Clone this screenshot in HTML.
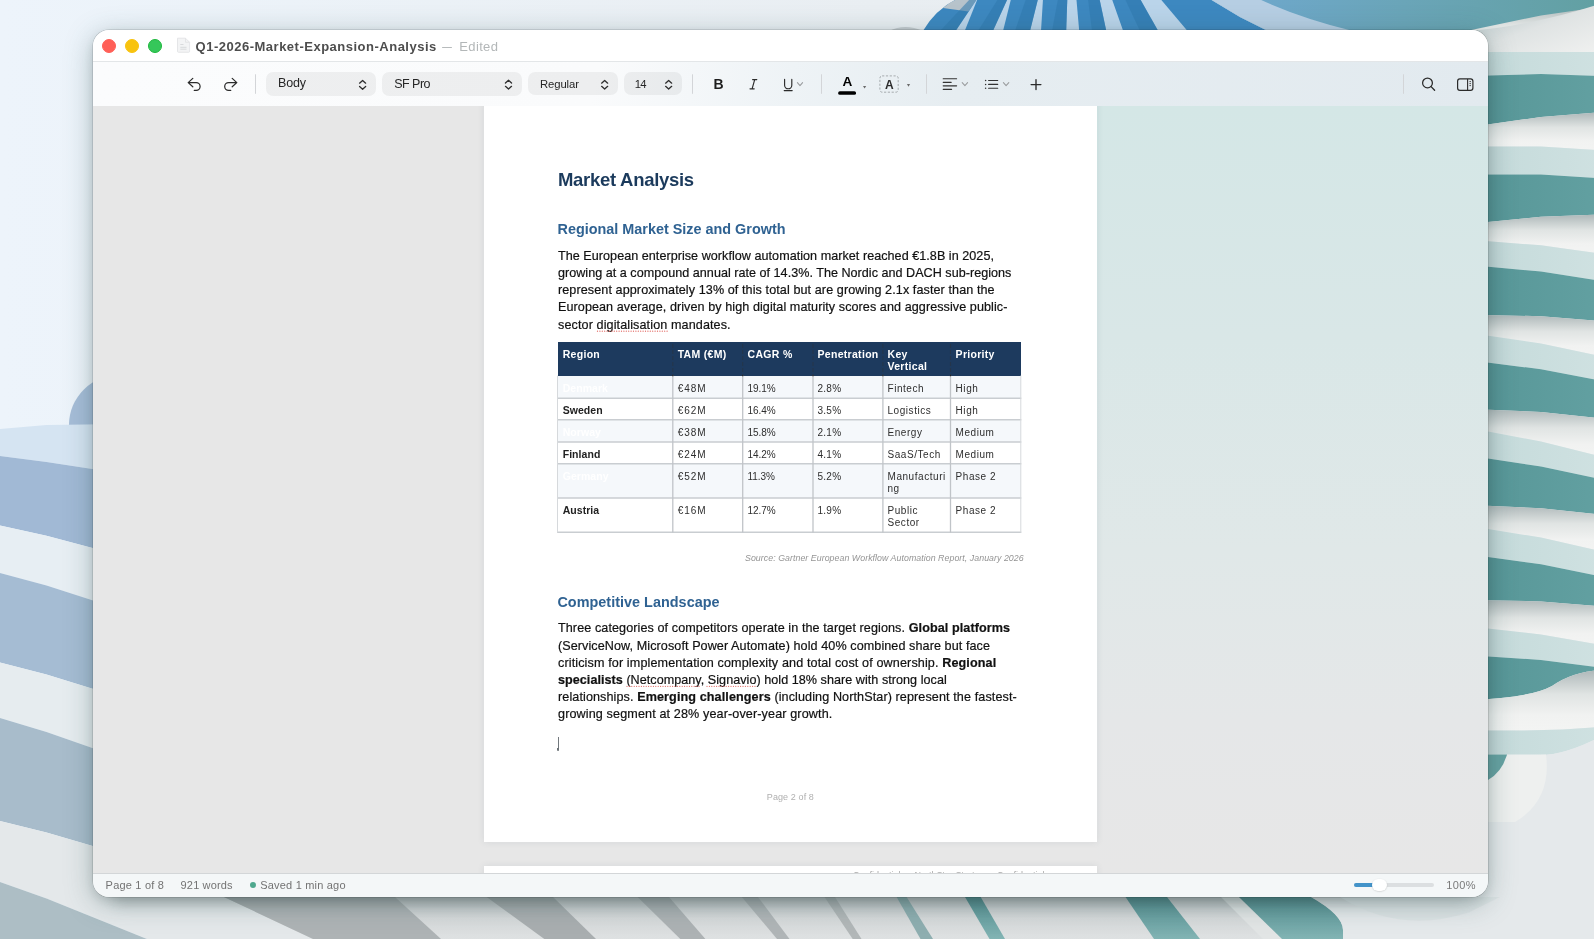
<!DOCTYPE html>
<html><head><meta charset="utf-8">
<style>
*{margin:0;padding:0;box-sizing:border-box}
html,body{width:1594px;height:939px;overflow:hidden}
body{position:relative;font-family:"Liberation Sans", sans-serif;background:#eaf1f8}
.t{position:absolute;white-space:pre;line-height:1}
.r{position:absolute}
svg{position:absolute;overflow:visible}
</style></head><body><div id="root" style="position:absolute;left:0;top:0;width:1594px;height:939px;will-change:transform">
<svg style="left:0;top:0" width="1594" height="939" viewBox="0 0 1594 939"><defs>
<linearGradient id="gbase" x1="0" y1="0" x2="1" y2="0"><stop offset="0" stop-color="#edf4fb"/><stop offset="0.55" stop-color="#e9eef2"/><stop offset="1" stop-color="#e6eaec"/></linearGradient>
<linearGradient id="gteal" x1="0" y1="0" x2="0" y2="1"><stop offset="0" stop-color="#5a9a9b"/><stop offset="1" stop-color="#4f8e90"/></linearGradient>
<linearGradient id="gwhite" x1="0" y1="0" x2="0" y2="1"><stop offset="0" stop-color="#cfd5d6"/><stop offset="0.45" stop-color="#eef0ef"/><stop offset="1" stop-color="#f2f3f2"/></linearGradient>
<linearGradient id="gtopblue" x1="0" y1="0" x2="1" y2="0"><stop offset="0" stop-color="#6fa8d0"/><stop offset="0.5" stop-color="#6aa5b8"/><stop offset="1" stop-color="#62a0a2"/></linearGradient>
<linearGradient id="tband" x1="0" y1="0" x2="0" y2="1"><stop offset="0" stop-color="#558f91"/><stop offset="1" stop-color="#82b4b4"/></linearGradient>
<linearGradient id="gbot" x1="0" y1="0" x2="0" y2="1"><stop offset="0" stop-color="#c3c7c9"/><stop offset="0.5" stop-color="#d6d9da"/><stop offset="1" stop-color="#dee1e2"/></linearGradient>
</defs><rect width="1594" height="939" fill="url(#gbase)"/><circle cx="119" cy="425" r="50" fill="#a6bdd8"/><path d="M0.0,429.0 L46.5,425.0 L420.0,420.0 L420.0,519.2 L46.5,462.0 L0.0,456.0 Z" fill="#d5e4f2"/><path d="M0.0,456.0 L46.5,462.0 L420.0,519.2 L420.0,635.3 L46.5,535.8 L0.0,525.6 Z" fill="#a1b9d5"/><path d="M0.0,525.6 L46.5,535.8 L420.0,635.3 L420.0,705.7 L46.5,585.6 L0.0,572.9 Z" fill="#e7eef3"/><path d="M0.0,572.9 L46.5,585.6 L420.0,705.7 L420.0,789.8 L46.5,674.5 L0.0,662.4 Z" fill="#a5bcd3"/><path d="M0.0,662.4 L46.5,674.5 L420.0,789.8 L420.0,862.5 L46.5,732.0 L0.0,718.0 Z" fill="#e6ecef"/><path d="M0.0,718.0 L46.5,732.0 L420.0,862.5 L420.0,941.6 L46.5,832.4 L0.0,821.0 Z" fill="#a8bccb"/><path d="M0.0,821.0 L46.5,832.4 L420.0,941.6 L420.0,1049.1 L46.5,898.5 L0.0,882.0 Z" fill="#e4e8ea"/><path d="M0.0,882.0 L46.5,898.5 L420.0,1049.1 L420.0,1140.6 L46.5,980.0 L0.0,960.0 Z" fill="#adbec5"/><path d="M889,31 Q905,23 923,31 Z" fill="#c6ccd0"/><path d="M922.9,31 Q935,10 956.7,-1 L980,-1 L977,12 L955.6,31 Z" fill="#3c87bf"/><path d="M943,8 Q950,2 957,-1 L980,-1 L972,12 Z" fill="#b7c3cb"/><path d="M955,31 L1268,31 L1240,17 L1210,-1 L977,-1 Z" fill="#3d88c0"/><path d="M955.6,31 L964.7,31 L977.5,-1 L977,-1 Z" fill="#bad4ea"/><path d="M992.9,31 L1003,31 L1011,-1 L1007.5,-1 Z" fill="#bad4ea"/><path d="M1030,31 L1041,31 L1043,-1 L1038,-1 Z" fill="#bad4ea"/><path d="M1066.2,31 L1079.2,31 L1076.4,-1 L1067.3,-1 Z" fill="#bad4ea"/><path d="M1106.3,31 L1123.2,31 L1111.9,-1 L1099.5,-1 Z" fill="#bad4ea"/><path d="M1158.2,31 L1187.5,31 L1160.5,-1 L1140.1,-1 Z" fill="#bad4ea"/><path d="M940,31 L955.6,31 L977,-1 L970,-1 Z" fill="#2f78ad" opacity="0.55"/><path d="M978,31 L992.9,31 L1007.5,-1 L998,-1 Z" fill="#2f78ad" opacity="0.55"/><path d="M1015,31 L1030,31 L1038,-1 L1026,-1 Z" fill="#2f78ad" opacity="0.55"/><path d="M1052,31 L1066.2,31 L1067.3,-1 L1058,-1 Z" fill="#2f78ad" opacity="0.55"/><path d="M1092,31 L1106.3,31 L1099.5,-1 L1088,-1 Z" fill="#2f78ad" opacity="0.55"/><path d="M1140,31 L1158.2,31 L1140.1,-1 L1125,-1 Z" fill="#2f78ad" opacity="0.55"/><path d="M1210,-1 L1600,-1 L1600,31 L1268,31 L1240,17 Z" fill="url(#gtopblue)"/><path d="M1210,-1 L1259,-1 Q1300,18 1353,31 L1268,31 L1240,17 Z" fill="#b6cee3"/><defs>
<linearGradient id="rteal" x1="0" y1="0" x2="1" y2="0"><stop offset="0" stop-color="#4e8b8d"/><stop offset="0.3" stop-color="#5a999a"/><stop offset="1" stop-color="#62a0a1"/></linearGradient>
<linearGradient id="rwhite" x1="0" y1="0" x2="0" y2="1"><stop offset="0" stop-color="#aeb8b9"/><stop offset="0.4" stop-color="#e0e4e3"/><stop offset="0.75" stop-color="#f1f2f1"/><stop offset="1" stop-color="#f3f4f3"/></linearGradient>
<linearGradient id="rlight" x1="0" y1="0" x2="1" y2="0"><stop offset="0" stop-color="#bfd2d3"/><stop offset="0.3" stop-color="#c7dcdc"/><stop offset="1" stop-color="#cfe1e1"/></linearGradient>
<linearGradient id="rshade" x1="0" y1="0" x2="1" y2="0"><stop offset="0" stop-color="#000" stop-opacity="0.16"/><stop offset="1" stop-color="#000" stop-opacity="0"/></linearGradient>
</defs><path d="M1470.0,30.2 L1541.0,15.5 L1600.0,6.9 L1600.0,52.1 L1541.0,49.5 L1470.0,50.8 Z" fill="url(#rwhite)"/><path d="M1470.0,50.8 L1541.0,49.5 L1600.0,52.1 L1600.0,76.0 L1541.0,74.0 L1470.0,76.0 Z" fill="url(#rlight)"/><path d="M1470.0,76.0 L1541.0,74.0 L1600.0,76.0 L1600.0,112.3 L1541.0,117.0 L1470.0,127.0 Z" fill="url(#rteal)"/><path d="M1470.0,127.0 L1541.0,117.0 L1600.0,112.3 L1600.0,150.2 L1541.0,146.5 L1470.0,146.5 Z" fill="url(#rwhite)"/><path d="M1470.0,146.5 L1541.0,146.5 L1600.0,150.2 L1600.0,178.2 L1541.0,174.5 L1470.0,174.5 Z" fill="url(#rlight)"/><path d="M1470.0,174.5 L1541.0,174.5 L1600.0,178.2 L1600.0,214.6 L1541.0,216.8 L1470.0,223.8 Z" fill="url(#rteal)"/><path d="M1470.0,223.8 L1541.0,216.8 L1600.0,214.6 L1600.0,253.6 L1541.0,245.3 L1470.0,239.8 Z" fill="url(#rwhite)"/><path d="M1470.0,239.8 L1541.0,245.3 L1600.0,253.6 L1600.0,280.7 L1541.0,271.6 L1470.0,265.0 Z" fill="url(#rlight)"/><path d="M1470.0,265.0 L1541.0,271.6 L1600.0,280.7 L1600.0,321.1 L1541.0,316.2 L1470.0,314.8 Z" fill="url(#rteal)"/><path d="M1470.0,314.8 L1541.0,316.2 L1600.0,321.1 L1600.0,356.1 L1541.0,343.6 L1470.0,333.0 Z" fill="url(#rwhite)"/><path d="M1470.0,333.0 L1541.0,343.6 L1600.0,356.1 L1600.0,380.5 L1541.0,369.3 L1470.0,360.2 Z" fill="url(#rlight)"/><path d="M1470.0,360.2 L1541.0,369.3 L1600.0,380.5 L1600.0,418.3 L1541.0,412.0 L1470.0,408.9 Z" fill="url(#rteal)"/><path d="M1470.0,408.9 L1541.0,412.0 L1600.0,418.3 L1600.0,456.3 L1541.0,441.5 L1470.0,428.1 Z" fill="url(#rwhite)"/><path d="M1470.0,428.1 L1541.0,441.5 L1600.0,456.3 L1600.0,479.1 L1541.0,466.5 L1470.0,455.8 Z" fill="url(#rlight)"/><path d="M1470.0,455.8 L1541.0,466.5 L1600.0,479.1 L1600.0,514.4 L1541.0,508.2 L1470.0,505.1 Z" fill="url(#rteal)"/><path d="M1470.0,505.1 L1541.0,508.2 L1600.0,514.4 L1600.0,551.0 L1541.0,537.6 L1470.0,525.9 Z" fill="url(#rwhite)"/><path d="M1470.0,525.9 L1541.0,537.6 L1600.0,551.0 L1600.0,576.3 L1541.0,564.3 L1470.0,554.4 Z" fill="url(#rlight)"/><path d="M1470.0,554.4 L1541.0,564.3 L1600.0,576.3 L1600.0,606.3 L1541.0,601.4 L1470.0,599.9 Z" fill="url(#rteal)"/><path d="M1470.0,599.9 L1541.0,601.4 L1600.0,606.3 L1600.0,644.8 L1541.0,634.5 L1470.0,626.5 Z" fill="url(#rwhite)"/><path d="M1470.0,626.5 L1541.0,634.5 L1600.0,644.8 L1600.0,667.6 L1541.0,660.0 L1470.0,655.3 Z" fill="url(#rlight)"/><defs><linearGradient id="w0" x1="0" y1="0" x2="1" y2="1"><stop offset="0" stop-color="#aebfc2"/><stop offset="0.5" stop-color="#dfe3e3"/><stop offset="1" stop-color="#f0f1f0"/></linearGradient></defs><path d="M1470,31 Q1530,26 1600,4 L1600,52 L1470,52 Z" fill="url(#w0)"/><path d="M1470,655.3 L1541,660 L1600,667.6 L1600,670 Q1572,672 1552,686 Q1530,698 1470,700 Z" fill="url(#rteal)"/><path d="M1470,700 Q1530,698 1552,686 Q1572,672 1600,670 L1600,727 Q1540,732 1470,730 Z" fill="url(#rwhite)"/><path d="M1470,730 Q1540,732 1600,727 L1600,737 Q1565,755 1540,755 L1470,755 Z" fill="url(#rlight)"/><path d="M1470,755 L1540,755 Q1565,755 1600,737 L1600,939 L1470,939 Z" fill="#e5e9eb"/><path d="M1470,754.5 L1546,754.5 Q1552,800 1515,822 L1470,822 Z" fill="#eef0ef"/><path d="M1470,754.5 L1507,754.5 Q1502,772 1488,780 L1470,780 Z" fill="#66a2a2"/><path d="M224,897 L1600,897 L1600,939 L313,939 Z" fill="url(#gbot)"/><path d="M224,897 L395,897 L441,939 L313,939 Z" fill="#aeb3b5" opacity="1"/><path d="M486.6,897 L553,897 L596,939 L544.3,939 Z" fill="#a9aeb0" opacity="1"/><path d="M637.6,897 L669,897 L705.4,939 L680.3,939 Z" fill="#adb2b4" opacity="1"/><path d="M741.8,897 L758,897 L789.5,939 L777,939 Z" fill="#b0b5b7" opacity="1"/><path d="M824.5,897 L835,897 L861.5,939 L852.7,939 Z" fill="#b2b7b8" opacity="1"/><path d="M896.6,897 L906.6,897 L933,939 L920.5,939 Z" fill="#8eaeb0" opacity="1"/><path d="M965,897 L980.7,897 L1005,939 L989.5,939 Z" fill="url(#tband)" opacity="1"/><path d="M1125.5,897 L1167,897 L1200,939 L1154,939 Z" fill="url(#tband)" opacity="1"/><path d="M1221,897 L1239,897 L1282,939 L1263,939 Z" fill="#e2e5e5" opacity="1"/><path d="M1239,897 L1311,897 Q1343,915 1343,930 L1343,939 L1282,939 Z" fill="url(#tband)"/><path d="M1311,897 L1600,897 L1600,939 L1343,939 L1343,930 Q1343,915 1311,897 Z" fill="#e5e9eb"/><defs><linearGradient id="bshade" x1="0" y1="0" x2="0" y2="1"><stop offset="0" stop-color="#000" stop-opacity="0.16"/><stop offset="0.5" stop-color="#000" stop-opacity="0.05"/><stop offset="1" stop-color="#000" stop-opacity="0"/></linearGradient></defs><defs><filter id="blur8" x="-20%" y="-200%" width="140%" height="500%"><feGaussianBlur stdDeviation="7"/></filter></defs><rect x="115" y="878" width="1350" height="26" fill="#1a2a2a" opacity="0.16" filter="url(#blur8)"/><path d="M1340,897 Q1400,935 1470,912 L1500,897 Z" fill="#d9dfe1" opacity="0.7"/><defs><linearGradient id="lshadow" x1="0" y1="0" x2="1" y2="0"><stop offset="0" stop-color="#9dbcbc" stop-opacity="0"/><stop offset="0.45" stop-color="#9dbcbc" stop-opacity="0.12"/><stop offset="0.75" stop-color="#8fb0b1" stop-opacity="0.28"/><stop offset="1" stop-color="#7d9799" stop-opacity="0.42"/></linearGradient></defs></svg><div class="r" style="left:93px;top:30px;width:1395px;height:867px;border-radius:16px;box-shadow:0 0 0 0.5px rgba(0,0,0,.2),0 4px 10px rgba(0,0,0,.10),0 6px 28px rgba(50,90,90,.36)"></div><div class="r" style="left:93px;top:30px;width:1395px;height:867px;border-radius:16px;overflow:hidden"><div class="r" style="left:0px;top:76px;width:1395px;height:767px;background:#e7e7e7;"></div><div class="r" style="left:1004px;top:76px;width:391px;height:767px;background:linear-gradient(180deg,#d4e7e6 0%,#d9e7e7 30%,#e0e8e8 58%,#e5e7e8 80%,#e7e7e7 100%);"></div><div class="r" style="left:391px;top:70px;width:613px;height:742px;background:#fff;box-shadow:0 0 7px rgba(50,70,90,0.10)"></div><div class="r" style="left:391px;top:836px;width:613px;height:14px;background:#fff;box-shadow:0 0 7px rgba(50,70,90,0.10)"></div><div class="r" style="left:0px;top:0px;width:1395px;height:31px;background:#fff;"></div><div class="r" style="left:0px;top:31px;width:1395px;height:1px;background:#e3e6e8;"></div><div class="r" style="left:0px;top:32px;width:1395px;height:44px;background:linear-gradient(100deg,#fbfcfd 0%,#fafbfc 36%,#eef3f6 50%,#e6edf1 62%,#e2eaef 100%);"></div><div class="r" style="left:0px;top:843px;width:1395px;height:1px;background:#d3d6d8;"></div><div class="r" style="left:0px;top:844px;width:1395px;height:23px;background:#f4f7f8;"></div></div><div class="r" style="left:101.8px;top:39px;width:14px;height:14px;border-radius:50%;background:#ff5f57;border:1px solid #ff5f57"></div><div class="r" style="left:124.9px;top:39px;width:14px;height:14px;border-radius:50%;background:#f8c30f;border:1px solid #f8c30f"></div><div class="r" style="left:147.8px;top:39px;width:14px;height:14px;border-radius:50%;background:#35c75a;border:1px solid #1db83c"></div><div class="t" style="left:195.60px;top:40.00px;font-size:13px;color:#4d4d4d;font-weight:bold;letter-spacing:0.5px">Q1-2026-Market-Expansion-Analysis</div><div class="r" style="left:441.6px;top:46.5px;width:10.799999999999955px;height:1.2999999999999972px;background:#b7bbbc;border-radius:0.6px"></div><div class="t" style="left:459.30px;top:40.00px;font-size:13px;color:#b3b7b8;letter-spacing:0.35px">Edited</div><div class="t" style="left:105.60px;top:880.00px;font-size:11px;color:#737373;letter-spacing:0.2px">Page 1 of 8</div><div class="t" style="left:180.60px;top:880.00px;font-size:11px;color:#737373;letter-spacing:0.15px">921 words</div><div class="r" style="left:250px;top:882.3px;width:6px;height:6px;border-radius:50%;background:#4fa88e"></div><div class="t" style="left:260.20px;top:880.00px;font-size:11px;color:#737373;letter-spacing:0.2px">Saved 1 min ago</div><div class="t" style="left:1446.20px;top:880.00px;font-size:11px;color:#7a7a7a;letter-spacing:0.4px">100%</div><div class="r" style="left:266.4px;top:72.1px;width:109.60000000000002px;height:23.80000000000001px;border-radius:7px;background:rgba(0,0,0,0.052)"></div><div class="r" style="left:382px;top:72px;width:139.89999999999998px;height:23.599999999999994px;border-radius:7px;background:rgba(0,0,0,0.052)"></div><div class="r" style="left:528.3px;top:72.3px;width:89.30000000000007px;height:23.10000000000001px;border-radius:7px;background:rgba(0,0,0,0.052)"></div><div class="r" style="left:624.2px;top:72.3px;width:57.59999999999991px;height:23.10000000000001px;border-radius:7px;background:rgba(0,0,0,0.052)"></div><div class="t" style="left:277.90px;top:77.00px;font-size:12.5px;color:#262626;letter-spacing:-0.1px">Body</div><div class="t" style="left:394.30px;top:78.00px;font-size:12.5px;color:#262626;letter-spacing:-0.55px">SF Pro</div><div class="t" style="left:540.00px;top:79.00px;font-size:11.3px;color:#262626;letter-spacing:-0.1px">Regular</div><div class="t" style="left:634.80px;top:79.00px;font-size:11.3px;color:#262626;letter-spacing:-0.8px">14</div><svg style="left:0;top:0" width="1594" height="939"><path d="M359.55,83.15 L362.60,80.40 L365.65,83.15 M359.55,86.45 L362.60,89.20 L365.65,86.45" fill="none" stroke="#2e2e2e" stroke-width="1.3" stroke-linecap="round" stroke-linejoin="round"/><path d="M505.45,83.05 L508.50,80.30 L511.55,83.05 M505.45,86.35 L508.50,89.10 L511.55,86.35" fill="none" stroke="#2e2e2e" stroke-width="1.3" stroke-linecap="round" stroke-linejoin="round"/><path d="M601.60,83.15 L604.65,80.40 L607.70,83.15 M601.60,86.35 L604.65,89.10 L607.70,86.35" fill="none" stroke="#2e2e2e" stroke-width="1.3" stroke-linecap="round" stroke-linejoin="round"/><path d="M665.60,83.15 L668.65,80.40 L671.70,83.15 M665.60,86.35 L668.65,89.10 L671.70,86.35" fill="none" stroke="#2e2e2e" stroke-width="1.3" stroke-linecap="round" stroke-linejoin="round"/><path d="M192.8,78.4 L188.2,82.6 L192.8,86.8 M188.2,82.6 H196.2 A3.9,3.9 0 0 1 196.2,90.4 H194.3" fill="none" stroke="#2b2b2b" stroke-width="1.25" stroke-linecap="round" stroke-linejoin="round"/><path d="M232.2,78.4 L236.8,82.6 L232.2,86.8 M236.8,82.6 H228.6 A3.9,3.9 0 0 0 228.6,90.4 H230.7" fill="none" stroke="#2b2b2b" stroke-width="1.25" stroke-linecap="round" stroke-linejoin="round"/><line x1="255.5" y1="74.3" x2="255.5" y2="93.8" stroke="#d3d5d8" stroke-width="1"/><line x1="692.5" y1="74.3" x2="692.5" y2="93.8" stroke="#d3d5d8" stroke-width="1"/><line x1="821.5" y1="74.3" x2="821.5" y2="93.8" stroke="#d3d5d8" stroke-width="1"/><line x1="926.5" y1="74.3" x2="926.5" y2="93.8" stroke="#d3d5d8" stroke-width="1"/><line x1="1403.5" y1="74.3" x2="1403.5" y2="93.8" stroke="#d3d5d8" stroke-width="1"/><path d="M752.6,79.6 H756.8 M750.0,88.8 H754.2 M754.7,79.6 L752.1,88.8" fill="none" stroke="#2b2b2b" stroke-width="1.15" stroke-linecap="round"/><path d="M784.6,79.4 V85.2 A3.6,3.6 0 0 0 791.8,85.2 V79.4" fill="none" stroke="#2b2b2b" stroke-width="1.15" stroke-linecap="round"/><line x1="784.2" y1="90.6" x2="792.2" y2="90.6" stroke="#2b2b2b" stroke-width="1.1" stroke-linecap="round"/><path d="M797.4,82.6 L800.0,85.7 L802.6,82.6" fill="none" stroke="#9a9c9e" stroke-width="1.05" stroke-linecap="round" stroke-linejoin="round"/><path d="M962.2,82.6 L964.9000000000001,85.6 L967.6,82.6" fill="none" stroke="#9a9c9e" stroke-width="1.05" stroke-linecap="round" stroke-linejoin="round"/><path d="M1003.4,82.6 L1006.0999999999999,85.6 L1008.8,82.6" fill="none" stroke="#9a9c9e" stroke-width="1.05" stroke-linecap="round" stroke-linejoin="round"/><rect x="838.2" y="91.2" width="17.8" height="3.6" rx="1.6" fill="#000"/><path d="M863,85.9 H866.2 L864.6,88.6 Z" fill="#6b6b6b"/><rect x="879.9" y="75.9" width="18.3" height="16.3" rx="2.2" fill="none" stroke="#9ea4a6" stroke-width="0.9" stroke-dasharray="2.2,1.6"/><path d="M906.9,84 H910.1 L908.5,86.7 Z" fill="#6b6b6b"/><path d="M943.2,78.7 H956.6 M943.2,82.3 H951.2 M943.2,85.8 H956.6 M943.2,89.3 H951.6" fill="none" stroke="#333" stroke-width="1.15" stroke-linecap="round"/><path d="M988.6,80.5 H997.7 M988.6,84.4 H997.7 M988.6,88.2 H997.7" fill="none" stroke="#333" stroke-width="1.15" stroke-linecap="round"/><circle cx="985.6" cy="80.5" r="0.75" fill="#333"/><circle cx="985.6" cy="84.4" r="0.75" fill="#333"/><circle cx="985.6" cy="88.2" r="0.75" fill="#333"/><path d="M1036,79.7 V89.5 M1031.1,84.6 H1040.9" fill="none" stroke="#2b2b2b" stroke-width="1.35" stroke-linecap="round"/><circle cx="1427.5" cy="82.9" r="4.9" fill="none" stroke="#2b2b2b" stroke-width="1.25"/><path d="M1431.1,86.6 L1434.6,90.3" fill="none" stroke="#2b2b2b" stroke-width="1.35" stroke-linecap="round"/><rect x="1457.6" y="78.9" width="15.3" height="11.4" rx="2.3" fill="none" stroke="#2b2b2b" stroke-width="1.2"/><line x1="1467.6" y1="79" x2="1467.6" y2="90.2" stroke="#2b2b2b" stroke-width="1.1"/><path d="M1469.4,81.6 H1471 M1469.4,83.6 H1471 M1469.4,85.6 H1471" stroke="#2b2b2b" stroke-width="0.8"/><path d="M177.5,38.2 H185.5 L189.6,42.3 V51.3 Q189.6,52.3 188.6,52.3 H178.5 Q177.5,52.3 177.5,51.3 Z" fill="#f3f4f5" stroke="#dfe1e3" stroke-width="0.8"/><path d="M185.5,38.2 V42.3 H189.6" fill="none" stroke="#dfe1e3" stroke-width="0.8"/><path d="M180.3,44.5 H183.5 M180.3,47.3 H186.5 M180.3,49.2 H186.5" stroke="#d5d7d9" stroke-width="0.9"/></svg><div class="t" style="left:713.60px;top:77.00px;font-size:14px;color:#1e1e1e;font-weight:bold">B</div><div class="t" style="left:842.60px;top:75.00px;font-size:13.6px;color:#000;font-weight:bold">A</div><div class="t" style="left:885.10px;top:79.00px;font-size:12px;color:#2b2b2b;font-weight:bold">A</div><div class="r" style="left:1354px;top:883px;width:80px;height:4px;border-radius:2px;background:#dcdfe1"></div><div class="r" style="left:1354px;top:883px;width:20px;height:4px;border-radius:2px;background:#4393c9"></div><div class="r" style="left:1371.6px;top:879.3px;width:15px;height:11.4px;border-radius:6px;background:#fff;box-shadow:0 0.5px 1.5px rgba(0,0,0,.18)"></div><div class="t" style="left:558.00px;top:171.00px;font-size:18.5px;color:#1b3a5c;font-weight:bold;letter-spacing:-0.29px">Market Analysis</div><div class="t" style="left:557.60px;top:222.00px;font-size:14.4px;color:#2f6292;font-weight:bold">Regional Market Size and Growth</div><div class="t" style="left:558.00px;top:250.00px;font-size:12.6px;color:#111111;letter-spacing:0.036px;-webkit-text-stroke:0.2px #111">The European enterprise workflow automation market reached €1.8B in 2025,</div><div class="t" style="left:558.00px;top:267.00px;font-size:12.6px;color:#111111;letter-spacing:0.018px;-webkit-text-stroke:0.2px #111">growing at a compound annual rate of 14.3%. The Nordic and DACH sub-regions</div><div class="t" style="left:558.00px;top:284.00px;font-size:12.6px;color:#111111;letter-spacing:0.088px;-webkit-text-stroke:0.2px #111">represent approximately 13% of this total but are growing 2.1x faster than the</div><div class="t" style="left:558.00px;top:301.00px;font-size:12.6px;color:#111111;letter-spacing:0.071px;-webkit-text-stroke:0.2px #111">European average, driven by high digital maturity scores and aggressive public-</div><div class="t" style="left:558.00px;top:319.00px;font-size:12.6px;color:#111111;letter-spacing:0.107px;-webkit-text-stroke:0.2px #111">sector digitalisation mandates.</div><div class="r" style="left:557.5px;top:342px;width:463.29999999999995px;height:33.60000000000002px;background:#1d3a5e;"></div><div class="r" style="left:557.5px;top:375.6px;width:463.29999999999995px;height:22.599999999999966px;background:#f5f8fb;"></div><div class="r" style="left:557.5px;top:398.2px;width:463.29999999999995px;height:21.600000000000023px;background:#ffffff;"></div><div class="r" style="left:557.5px;top:419.8px;width:463.29999999999995px;height:22.19999999999999px;background:#f5f8fb;"></div><div class="r" style="left:557.5px;top:442.0px;width:463.29999999999995px;height:21.69999999999999px;background:#ffffff;"></div><div class="r" style="left:557.5px;top:463.7px;width:463.29999999999995px;height:34.30000000000001px;background:#f5f8fb;"></div><div class="r" style="left:557.5px;top:498.0px;width:463.29999999999995px;height:34.299999999999955px;background:#ffffff;"></div><svg style="left:0;top:0" width="1594" height="939"><line x1="557" y1="398.2" x2="1021.3" y2="398.2" stroke="#c9cdd1" stroke-width="1.6"/><line x1="557" y1="419.8" x2="1021.3" y2="419.8" stroke="#c9cdd1" stroke-width="1.6"/><line x1="557" y1="442.0" x2="1021.3" y2="442.0" stroke="#c9cdd1" stroke-width="1.6"/><line x1="557" y1="463.7" x2="1021.3" y2="463.7" stroke="#c9cdd1" stroke-width="1.6"/><line x1="557" y1="498.0" x2="1021.3" y2="498.0" stroke="#c9cdd1" stroke-width="1.6"/><line x1="557" y1="532.3" x2="1021.3" y2="532.3" stroke="#c9cdd1" stroke-width="1.6"/><line x1="557.5" y1="375.6" x2="557.5" y2="532.6" stroke="#d6d9dc" stroke-width="1"/><line x1="672.8" y1="375.6" x2="672.8" y2="532.6" stroke="#c0c4c8" stroke-width="1.3"/><line x1="672.8" y1="344.5" x2="672.8" y2="375.6" stroke="#2c3138" stroke-width="1.1" stroke-dasharray="1,1.1,1,2.9"/><rect x="672.1999999999999" y="375" width="1.2" height="1.2" fill="#222"/><line x1="742.7" y1="375.6" x2="742.7" y2="532.6" stroke="#c0c4c8" stroke-width="1.3"/><line x1="742.7" y1="344.5" x2="742.7" y2="375.6" stroke="#2c3138" stroke-width="1.1" stroke-dasharray="1,1.1,1,2.9"/><rect x="742.1" y="375" width="1.2" height="1.2" fill="#222"/><line x1="813.0" y1="375.6" x2="813.0" y2="532.6" stroke="#c0c4c8" stroke-width="1.3"/><line x1="813.0" y1="344.5" x2="813.0" y2="375.6" stroke="#2c3138" stroke-width="1.1" stroke-dasharray="1,1.1,1,2.9"/><rect x="812.4" y="375" width="1.2" height="1.2" fill="#222"/><line x1="882.9" y1="375.6" x2="882.9" y2="532.6" stroke="#c0c4c8" stroke-width="1.3"/><line x1="882.9" y1="344.5" x2="882.9" y2="375.6" stroke="#2c3138" stroke-width="1.1" stroke-dasharray="1,1.1,1,2.9"/><rect x="882.3" y="375" width="1.2" height="1.2" fill="#222"/><line x1="950.5" y1="375.6" x2="950.5" y2="532.6" stroke="#c0c4c8" stroke-width="1.3"/><line x1="950.5" y1="344.5" x2="950.5" y2="375.6" stroke="#2c3138" stroke-width="1.1" stroke-dasharray="1,1.1,1,2.9"/><rect x="949.9" y="375" width="1.2" height="1.2" fill="#222"/><line x1="1020.8" y1="375.6" x2="1020.8" y2="532.6" stroke="#d6d9dc" stroke-width="1"/></svg><div class="t" style="left:562.70px;top:349.00px;font-size:10.5px;color:#ffffff;font-weight:bold;letter-spacing:0.3px">Region</div><div class="t" style="left:677.70px;top:349.00px;font-size:10.5px;color:#ffffff;font-weight:bold;letter-spacing:0.3px">TAM (€M)</div><div class="t" style="left:747.60px;top:349.00px;font-size:10.5px;color:#ffffff;font-weight:bold;letter-spacing:0.3px">CAGR %</div><div class="t" style="left:817.50px;top:349.00px;font-size:10.5px;color:#ffffff;font-weight:bold;letter-spacing:0.3px">Penetration</div><div class="t" style="left:887.50px;top:349.00px;font-size:10.5px;color:#ffffff;font-weight:bold;letter-spacing:0.3px">Key</div><div class="t" style="left:955.60px;top:349.00px;font-size:10.5px;color:#ffffff;font-weight:bold;letter-spacing:0.3px">Priority</div><div class="t" style="left:887.50px;top:361.00px;font-size:10.5px;color:#ffffff;font-weight:bold;letter-spacing:0.3px">Vertical</div><div class="t" style="left:562.70px;top:383.00px;font-size:10.5px;color:#ffffff;font-weight:bold;letter-spacing:0.05px">Denmark</div><div class="t" style="left:677.70px;top:384.00px;font-size:10px;color:#2e2e2e;letter-spacing:0.95px">€48M</div><div class="t" style="left:747.60px;top:384.00px;font-size:10px;color:#2e2e2e;letter-spacing:-0.05px">19.1%</div><div class="t" style="left:817.50px;top:384.00px;font-size:10px;color:#2e2e2e;letter-spacing:0.25px">2.8%</div><div class="t" style="left:887.50px;top:384.00px;font-size:10px;color:#2e2e2e;letter-spacing:0.55px">Fintech</div><div class="t" style="left:955.60px;top:384.00px;font-size:10px;color:#2e2e2e;letter-spacing:0.55px">High</div><div class="t" style="left:562.70px;top:405.00px;font-size:10.5px;color:#222222;font-weight:bold;letter-spacing:0.05px">Sweden</div><div class="t" style="left:677.70px;top:406.00px;font-size:10px;color:#2e2e2e;letter-spacing:0.95px">€62M</div><div class="t" style="left:747.60px;top:406.00px;font-size:10px;color:#2e2e2e;letter-spacing:-0.05px">16.4%</div><div class="t" style="left:817.50px;top:406.00px;font-size:10px;color:#2e2e2e;letter-spacing:0.25px">3.5%</div><div class="t" style="left:887.50px;top:406.00px;font-size:10px;color:#2e2e2e;letter-spacing:0.55px">Logistics</div><div class="t" style="left:955.60px;top:406.00px;font-size:10px;color:#2e2e2e;letter-spacing:0.55px">High</div><div class="t" style="left:562.70px;top:427.00px;font-size:10.5px;color:#ffffff;font-weight:bold;letter-spacing:0.05px">Norway</div><div class="t" style="left:677.70px;top:428.00px;font-size:10px;color:#2e2e2e;letter-spacing:0.95px">€38M</div><div class="t" style="left:747.60px;top:428.00px;font-size:10px;color:#2e2e2e;letter-spacing:-0.05px">15.8%</div><div class="t" style="left:817.50px;top:428.00px;font-size:10px;color:#2e2e2e;letter-spacing:0.25px">2.1%</div><div class="t" style="left:887.50px;top:428.00px;font-size:10px;color:#2e2e2e;letter-spacing:0.55px">Energy</div><div class="t" style="left:955.60px;top:428.00px;font-size:10px;color:#2e2e2e;letter-spacing:0.55px">Medium</div><div class="t" style="left:562.70px;top:449.00px;font-size:10.5px;color:#222222;font-weight:bold;letter-spacing:0.05px">Finland</div><div class="t" style="left:677.70px;top:450.00px;font-size:10px;color:#2e2e2e;letter-spacing:0.95px">€24M</div><div class="t" style="left:747.60px;top:450.00px;font-size:10px;color:#2e2e2e;letter-spacing:-0.05px">14.2%</div><div class="t" style="left:817.50px;top:450.00px;font-size:10px;color:#2e2e2e;letter-spacing:0.25px">4.1%</div><div class="t" style="left:887.50px;top:450.00px;font-size:10px;color:#2e2e2e;letter-spacing:0.55px">SaaS/Tech</div><div class="t" style="left:955.60px;top:450.00px;font-size:10px;color:#2e2e2e;letter-spacing:0.55px">Medium</div><div class="t" style="left:562.70px;top:471.00px;font-size:10.5px;color:#ffffff;font-weight:bold;letter-spacing:0.05px">Germany</div><div class="t" style="left:677.70px;top:472.00px;font-size:10px;color:#2e2e2e;letter-spacing:0.95px">€52M</div><div class="t" style="left:747.60px;top:472.00px;font-size:10px;color:#2e2e2e;letter-spacing:-0.05px">11.3%</div><div class="t" style="left:817.50px;top:472.00px;font-size:10px;color:#2e2e2e;letter-spacing:0.25px">5.2%</div><div class="t" style="left:887.50px;top:472.00px;font-size:10px;color:#2e2e2e;letter-spacing:0.55px">Manufacturi</div><div class="t" style="left:887.50px;top:484.00px;font-size:10px;color:#2e2e2e;letter-spacing:0.55px">ng</div><div class="t" style="left:955.60px;top:472.00px;font-size:10px;color:#2e2e2e;letter-spacing:0.55px">Phase 2</div><div class="t" style="left:562.70px;top:505.00px;font-size:10.5px;color:#222222;font-weight:bold;letter-spacing:0.05px">Austria</div><div class="t" style="left:677.70px;top:506.00px;font-size:10px;color:#2e2e2e;letter-spacing:0.95px">€16M</div><div class="t" style="left:747.60px;top:506.00px;font-size:10px;color:#2e2e2e;letter-spacing:-0.05px">12.7%</div><div class="t" style="left:817.50px;top:506.00px;font-size:10px;color:#2e2e2e;letter-spacing:0.25px">1.9%</div><div class="t" style="left:887.50px;top:506.00px;font-size:10px;color:#2e2e2e;letter-spacing:0.55px">Public</div><div class="t" style="left:887.50px;top:518.00px;font-size:10px;color:#2e2e2e;letter-spacing:0.55px">Sector</div><div class="t" style="left:955.60px;top:506.00px;font-size:10px;color:#2e2e2e;letter-spacing:0.55px">Phase 2</div><div class="t" style="left:745.00px;top:554.00px;font-size:8.8px;color:#949494;font-style:italic;letter-spacing:0.05px">Source: Gartner European Workflow Automation Report, January 2026</div><div class="t" style="left:557.40px;top:595.00px;font-size:14.4px;color:#2f6292;font-weight:bold;letter-spacing:0.03px">Competitive Landscape</div><div class="t" style="left:558.00px;top:622.00px;font-size:12.6px;color:#111111;letter-spacing:0.088px;-webkit-text-stroke:0.2px #111">Three categories of competitors operate in the target regions. <b>Global platforms</b></div><div class="t" style="left:558.00px;top:640.00px;font-size:12.6px;color:#111111;letter-spacing:0.081px;-webkit-text-stroke:0.2px #111">(ServiceNow, Microsoft Power Automate) hold 40% combined share but face</div><div class="t" style="left:558.00px;top:657.00px;font-size:12.6px;color:#111111;letter-spacing:0.121px;-webkit-text-stroke:0.2px #111">criticism for implementation complexity and total cost of ownership. <b>Regional</b></div><div class="t" style="left:558.00px;top:674.00px;font-size:12.6px;color:#111111;letter-spacing:0.039px;-webkit-text-stroke:0.2px #111"><b>specialists</b> (Netcompany, Signavio) hold 18% share with strong local</div><div class="t" style="left:558.00px;top:691.00px;font-size:12.6px;color:#111111;letter-spacing:0.1px;-webkit-text-stroke:0.2px #111">relationships. <b>Emerging challengers</b> (including NorthStar) represent the fastest-</div><div class="t" style="left:558.00px;top:708.00px;font-size:12.6px;color:#111111;letter-spacing:0.125px;-webkit-text-stroke:0.2px #111">growing segment at 28% year-over-year growth.</div><svg style="left:0;top:0" width="1594" height="939"><circle cx="597.5" cy="331.2" r="0.6" fill="#e0605a"/><circle cx="599.9" cy="331.2" r="0.6" fill="#e0605a"/><circle cx="602.3" cy="331.2" r="0.6" fill="#e0605a"/><circle cx="604.7" cy="331.2" r="0.6" fill="#e0605a"/><circle cx="607.1" cy="331.2" r="0.6" fill="#e0605a"/><circle cx="609.5" cy="331.2" r="0.6" fill="#e0605a"/><circle cx="611.9" cy="331.2" r="0.6" fill="#e0605a"/><circle cx="614.3" cy="331.2" r="0.6" fill="#e0605a"/><circle cx="616.7" cy="331.2" r="0.6" fill="#e0605a"/><circle cx="619.1" cy="331.2" r="0.6" fill="#e0605a"/><circle cx="621.5" cy="331.2" r="0.6" fill="#e0605a"/><circle cx="623.9" cy="331.2" r="0.6" fill="#e0605a"/><circle cx="626.3" cy="331.2" r="0.6" fill="#e0605a"/><circle cx="628.7" cy="331.2" r="0.6" fill="#e0605a"/><circle cx="631.1" cy="331.2" r="0.6" fill="#e0605a"/><circle cx="633.5" cy="331.2" r="0.6" fill="#e0605a"/><circle cx="635.9" cy="331.2" r="0.6" fill="#e0605a"/><circle cx="638.3" cy="331.2" r="0.6" fill="#e0605a"/><circle cx="640.7" cy="331.2" r="0.6" fill="#e0605a"/><circle cx="643.1" cy="331.2" r="0.6" fill="#e0605a"/><circle cx="645.5" cy="331.2" r="0.6" fill="#e0605a"/><circle cx="647.9" cy="331.2" r="0.6" fill="#e0605a"/><circle cx="650.3" cy="331.2" r="0.6" fill="#e0605a"/><circle cx="652.7" cy="331.2" r="0.6" fill="#e0605a"/><circle cx="655.1" cy="331.2" r="0.6" fill="#e0605a"/><circle cx="657.5" cy="331.2" r="0.6" fill="#e0605a"/><circle cx="659.9" cy="331.2" r="0.6" fill="#e0605a"/><circle cx="662.3" cy="331.2" r="0.6" fill="#e0605a"/><circle cx="664.7" cy="331.2" r="0.6" fill="#e0605a"/><circle cx="667.1" cy="331.2" r="0.6" fill="#e0605a"/><circle cx="627.0" cy="686.3" r="0.6" fill="#e0605a"/><circle cx="629.4" cy="686.3" r="0.6" fill="#e0605a"/><circle cx="631.8" cy="686.3" r="0.6" fill="#e0605a"/><circle cx="634.2" cy="686.3" r="0.6" fill="#e0605a"/><circle cx="636.6" cy="686.3" r="0.6" fill="#e0605a"/><circle cx="639.0" cy="686.3" r="0.6" fill="#e0605a"/><circle cx="641.4" cy="686.3" r="0.6" fill="#e0605a"/><circle cx="643.8" cy="686.3" r="0.6" fill="#e0605a"/><circle cx="646.2" cy="686.3" r="0.6" fill="#e0605a"/><circle cx="648.6" cy="686.3" r="0.6" fill="#e0605a"/><circle cx="651.0" cy="686.3" r="0.6" fill="#e0605a"/><circle cx="653.4" cy="686.3" r="0.6" fill="#e0605a"/><circle cx="655.8" cy="686.3" r="0.6" fill="#e0605a"/><circle cx="658.2" cy="686.3" r="0.6" fill="#e0605a"/><circle cx="660.6" cy="686.3" r="0.6" fill="#e0605a"/><circle cx="663.0" cy="686.3" r="0.6" fill="#e0605a"/><circle cx="665.4" cy="686.3" r="0.6" fill="#e0605a"/><circle cx="667.8" cy="686.3" r="0.6" fill="#e0605a"/><circle cx="670.2" cy="686.3" r="0.6" fill="#e0605a"/><circle cx="672.6" cy="686.3" r="0.6" fill="#e0605a"/><circle cx="675.0" cy="686.3" r="0.6" fill="#e0605a"/><circle cx="677.4" cy="686.3" r="0.6" fill="#e0605a"/><circle cx="679.8" cy="686.3" r="0.6" fill="#e0605a"/><circle cx="682.2" cy="686.3" r="0.6" fill="#e0605a"/><circle cx="684.6" cy="686.3" r="0.6" fill="#e0605a"/><circle cx="687.0" cy="686.3" r="0.6" fill="#e0605a"/><circle cx="689.4" cy="686.3" r="0.6" fill="#e0605a"/><circle cx="691.8" cy="686.3" r="0.6" fill="#e0605a"/><circle cx="694.2" cy="686.3" r="0.6" fill="#e0605a"/><circle cx="696.6" cy="686.3" r="0.6" fill="#e0605a"/><circle cx="699.0" cy="686.3" r="0.6" fill="#e0605a"/><circle cx="707.0" cy="686.3" r="0.6" fill="#e0605a"/><circle cx="709.4" cy="686.3" r="0.6" fill="#e0605a"/><circle cx="711.8" cy="686.3" r="0.6" fill="#e0605a"/><circle cx="714.2" cy="686.3" r="0.6" fill="#e0605a"/><circle cx="716.6" cy="686.3" r="0.6" fill="#e0605a"/><circle cx="719.0" cy="686.3" r="0.6" fill="#e0605a"/><circle cx="721.4" cy="686.3" r="0.6" fill="#e0605a"/><circle cx="723.8" cy="686.3" r="0.6" fill="#e0605a"/><circle cx="726.2" cy="686.3" r="0.6" fill="#e0605a"/><circle cx="728.6" cy="686.3" r="0.6" fill="#e0605a"/><circle cx="731.0" cy="686.3" r="0.6" fill="#e0605a"/><circle cx="733.4" cy="686.3" r="0.6" fill="#e0605a"/><circle cx="735.8" cy="686.3" r="0.6" fill="#e0605a"/><circle cx="738.2" cy="686.3" r="0.6" fill="#e0605a"/><circle cx="740.6" cy="686.3" r="0.6" fill="#e0605a"/><circle cx="743.0" cy="686.3" r="0.6" fill="#e0605a"/><circle cx="745.4" cy="686.3" r="0.6" fill="#e0605a"/><circle cx="747.8" cy="686.3" r="0.6" fill="#e0605a"/><circle cx="750.2" cy="686.3" r="0.6" fill="#e0605a"/><circle cx="752.6" cy="686.3" r="0.6" fill="#e0605a"/><circle cx="755.0" cy="686.3" r="0.6" fill="#e0605a"/><rect x="558" y="737" width="1" height="13.7" fill="#72787d"/><rect x="557" y="748" width="1.5" height="2.7" fill="#6c7277"/></svg><div class="t" style="left:766.80px;top:793.00px;font-size:9px;color:#b0b0b0;letter-spacing:0.1px">Page 2 of 8</div><div class="r" style="left:484px;top:866px;width:613px;height:7px;overflow:hidden"><div class="t" style="left:369px;top:5px;font-size:9px;color:#a9a9a9;letter-spacing:0px">Confidential — NorthStar Strategy · Confidential</div></div>
</div></body></html>
